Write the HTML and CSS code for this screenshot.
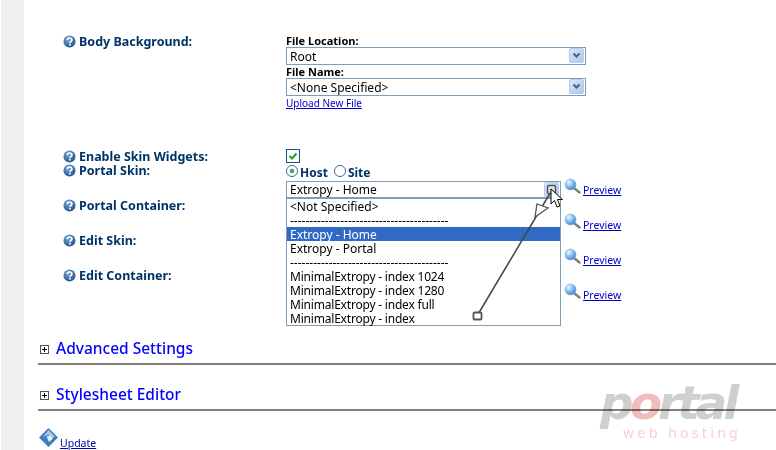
FILE: index.html
```html
<!DOCTYPE html>
<html lang="en">
<head>
<meta charset="utf-8">
<title>Skin settings</title>
<link rel="stylesheet" href="styles.css">
</head>
<body>
<svg class="defs" width="0" height="0" aria-hidden="true">
  <defs>
    <radialGradient id="help" cx="40%" cy="30%" r="75%"><stop offset="0" stop-color="#7fa8d6"/><stop offset="1" stop-color="#1c4f8c"/></radialGradient>
    <radialGradient id="lens" cx="35%" cy="30%" r="75%"><stop offset="0" stop-color="#eef7ff"/><stop offset="0.55" stop-color="#7db9ee"/><stop offset="1" stop-color="#3b7fd0"/></radialGradient>
    <linearGradient id="btn" x1="0" y1="0" x2="1" y2="1"><stop offset="0" stop-color="#dbe6fb"/><stop offset="1" stop-color="#aec4ee"/></linearGradient>
    <symbol id="i-help" viewBox="0 0 13 13"><circle cx="6.5" cy="6.5" r="6" fill="url(#help)"/><path d="M4.300 5.100C4.400 3.600 5.400 3 6.600 3c1.300 0 2.300.8 2.300 1.900 0 1-.6 1.400-1.200 1.800-.5.3-.7.6-.7 1.200" fill="none" stroke="#fff" stroke-width="1.600"/><rect x="6" y="8.800" width="1.700" height="1.700" fill="#fff"/></symbol>
    <symbol id="i-zoom" viewBox="0 0 17 17"><path d="M10 10l5.500 4.500" stroke="#808080" stroke-width="2.400" stroke-linecap="round"/><circle cx="6.500" cy="6.500" r="5.500" fill="url(#lens)" stroke="#8fb0d6" stroke-width=".6"/></symbol>
    <symbol id="i-arrow" viewBox="0 0 15 15"><rect x=".5" y=".5" width="14" height="14" rx="1.500" fill="url(#btn)" stroke="#b8cbee"/><path d="M4.500 5.500l3 3 3-3" fill="none" stroke="#4d6185" stroke-width="2"/></symbol>
  </defs>
</svg>
<div class="page">
  <aside class="side"></aside>
  <main class="main">
    <section class="form">
      <div class="row row-bg">
        <div class="label"><svg class="help"><use href="#i-help"/></svg>Body Background:</div>
        <div class="control">
          <div class="cap">File Location:</div>
          <div class="select wide"><span>Root</span><svg class="arrow"><use href="#i-arrow"/></svg></div>
          <div class="cap">File Name:</div>
          <div class="select wide"><span>&lt;None Specified&gt;</span><svg class="arrow"><use href="#i-arrow"/></svg></div>
          <a class="upload" href="#">Upload New File</a>
        </div>
      </div>
      <div class="row row-check">
        <div class="label"><svg class="help"><use href="#i-help"/></svg>Enable Skin Widgets:</div>
        <div class="control">
          <svg class="check" viewBox="0 0 14 14"><rect x=".5" y=".5" width="13" height="13" fill="#fff" stroke="#1c5180"/><path d="M3.500 7l2.500 2.500 4.500-5" fill="none" stroke="#21a121" stroke-width="2"/></svg>
        </div>
      </div>
      <div class="row row-sel">
        <div class="label"><svg class="help"><use href="#i-help"/></svg>Portal Skin:</div>
        <div class="control">
          <div class="radios">
            <svg class="radio" viewBox="0 0 13 13"><circle cx="6.500" cy="6.500" r="6" fill="#fff" stroke="#2f5f8f"/><circle cx="6.500" cy="6.500" r="2.500" fill="#3cb14a"/></svg><span class="radio-text">Host</span>
            <svg class="radio second" viewBox="0 0 13 13"><circle cx="6.500" cy="6.500" r="6" fill="#fff" stroke="#2f5f8f"/></svg><span class="radio-text">Site</span>
          </div>
          <div class="inline anchor">
            <div class="select skin"><span>Extropy - Home</span><svg class="arrow"><use href="#i-arrow"/></svg></div>
            <svg class="zoom"><use href="#i-zoom"/></svg><a class="preview" href="#">Preview</a>
            <ul class="dropdown">
              <li>&lt;Not Specified&gt;</li>
              <li>-----------------------------------------</li>
              <li class="on">Extropy - Home</li>
              <li>Extropy - Portal</li>
              <li>-----------------------------------------</li>
              <li class="tight">MinimalExtropy - index 1024</li>
              <li class="tight">MinimalExtropy - index 1280</li>
              <li class="tight">MinimalExtropy - index full</li>
              <li class="tight">MinimalExtropy - index</li>
            </ul>
          </div>
        </div>
      </div>
      <div class="row row-sel">
        <div class="label"><svg class="help"><use href="#i-help"/></svg>Portal Container:</div>
        <div class="control inline lower">
          <div class="select skin"></div>
          <svg class="zoom"><use href="#i-zoom"/></svg><a class="preview" href="#">Preview</a>
        </div>
      </div>
      <div class="row row-sel">
        <div class="label"><svg class="help"><use href="#i-help"/></svg>Edit Skin:</div>
        <div class="control inline lower">
          <div class="select skin"></div>
          <svg class="zoom"><use href="#i-zoom"/></svg><a class="preview" href="#">Preview</a>
        </div>
      </div>
      <div class="row row-sel">
        <div class="label"><svg class="help"><use href="#i-help"/></svg>Edit Container:</div>
        <div class="control inline lower">
          <div class="select skin"></div>
          <svg class="zoom"><use href="#i-zoom"/></svg><a class="preview" href="#">Preview</a>
        </div>
      </div>
    </section>
    <section class="group">
      <svg class="plus" viewBox="0 0 9 9"><rect x=".5" y=".5" width="8" height="8" fill="#fff" stroke="#555"/><path d="M2 4.500h5M4.500 2v5" stroke="#000"/></svg>
      <h2 class="group-title">Advanced Settings</h2>
    </section>
    <section class="group">
      <svg class="plus" viewBox="0 0 9 9"><rect x=".5" y=".5" width="8" height="8" fill="#fff" stroke="#555"/><path d="M2 4.500h5M4.500 2v5" stroke="#000"/></svg>
      <h2 class="group-title">Stylesheet Editor</h2>
    </section>
    <div class="actions">
      <svg class="update-icon" viewBox="0 0 19 19"><path d="M9.500 1L18 9.500 9.500 18 1 9.500z" fill="#3f7fc0" stroke="#3f7fc0" stroke-linejoin="round" stroke-width="1.500"/><path d="M9.500 2L16 8.500 12 10.500 9.500 6.500 4 9z" fill="#a8cbea"/><path d="M7.500 8.500l4-1 2.500 3-4 3.500z" fill="#e6f0fa"/></svg>
      <a class="update" href="#">Update</a>
    </div>
  </main>
</div>
<svg class="callout" width="776" height="450" viewBox="0 0 776 450" aria-hidden="true">
  <path d="M477 316L552 190" stroke="#444" stroke-width="1.500"/>
  <path d="M537 204L548 208 535 217z" fill="#fff" stroke="#555" stroke-width="1.300"/>
  <rect x="473.500" y="312.500" width="8" height="7" rx="1" fill="#fff" stroke="#555" stroke-width="1.800"/>
  <rect x="547.500" y="185.500" width="8" height="8" rx="1" fill="#ddd" stroke="#555" stroke-width="1.500"/>
  <path d="M551 189v15l3.500-3.500 2.500 6.500 3-1-2.500-6.500h5z" fill="#fff" stroke="#000"/>
</svg>
<div class="logo"><div class="logo-name">p<span class="logo-o">o</span>rtal</div><div class="logo-sub">web hosting</div></div>
</body>
</html>
```
FILE: styles.css
```css
* { box-sizing: border-box; }
html, body { margin: 0; padding: 0; }
body {
  width: 776px;
  height: 450px;
  overflow: hidden;
  background: #fff;
  font-family: "Noto Sans", "DejaVu Sans", sans-serif;
  font-size: 12px;
  color: #000;
  position: relative;
}
.defs { position: absolute; }
.page { display: flex; height: 450px; }
.side { width: 23px; margin-left: 1px; background: #efefef; flex: none; }
.main { flex: 1; min-width: 0; padding-left: 14px; }

.form { padding: 34px 0 16px 25px; }
.row { display: grid; grid-template-columns: 223px 1fr; }
.row-bg { height: 115px; }
.row-check { height: 14px; }
.row-sel { height: 35px; }

.label {
  display: flex;
  align-items: center;
  height: 15px;
  gap: 3px;
  font-weight: bold;
  font-size: 12.500px;
  line-height: 15px;
  color: #003366;
}
.help { width: 13px; height: 13px; flex: none; }
.cap { font-weight: bold; font-size: 11px; line-height: 13px; height: 13px; }
.select {
  position: relative;
  display: flex;
  align-items: center;
  height: 18px;
  border: 1px solid #7f9db9;
  background: #fff;
  padding-left: 3px;
  font-size: 12px;
}
.select.wide { width: 300px; }
.select.skin { width: 275px; height: 17px; flex: none; }
.arrow { position: absolute; right: 1px; top: 0; width: 15px; height: 15px; }
.upload { font-size: 10px; color: #00c; line-height: 14px; display: block; }

.check { width: 14px; height: 14px; display: block; }
.radios { display: flex; align-items: center; height: 18px; font-weight: bold; font-size: 12px; color: #003366; }
.radio { width: 12px; height: 12px; flex: none; margin-top: -3px; }
.radio-text { margin-left: 2px; }
.radio.second { margin-left: 6px; }

.inline { display: flex; align-items: flex-start; }
.lower { padding-top: 18px; }
.anchor { position: relative; }
.zoom { width: 17px; height: 17px; margin-left: 3px; flex: none; margin-top: -3px; }
.preview { font-size: 10.500px; color: #00c; margin-left: 2px; line-height: 19px; }

.dropdown {
  position: absolute;
  left: 0;
  top: 17px;
  width: 275px;
  margin: 0;
  padding: 0;
  list-style: none;
  background: #fff;
  border: 1px solid #7f9db9;
  font-size: 12px;
  z-index: 2;
}
.dropdown li { height: 14px; line-height: 16px; padding-left: 3px; white-space: nowrap; }
.dropdown .on { background: #316ac5; color: #fff; }
.dropdown .tight { letter-spacing: -0.2px; }

.group {
  display: flex;
  align-items: center;
  height: 46px;
  padding-top: 14px;
  border-bottom: 2px solid #808080;
  padding-left: 2px;
  gap: 7px;
}
.plus { width: 9px; height: 9px; flex: none; margin-top: 2px; }
.group-title { margin: 0; font-size: 15.500px; font-weight: 500; color: #00f; }

.actions { display: flex; align-items: flex-start; padding-top: 17px; gap: 2px; padding-left: 1px; }
.update-icon { width: 19px; height: 19px; flex: none; }
.update { font-size: 10.500px; color: #00a; line-height: 12px; margin-top: 9px; }

.callout { position: absolute; left: 0; top: 0; z-index: 5; pointer-events: none; }
.logo {
  position: absolute;
  left: 600px;
  top: 381px;
  width: 148px;
  filter: blur(.5px);
  mix-blend-mode: multiply;
  z-index: 6;
  font-family: "DejaVu Sans", sans-serif;
}
.logo-name { font-size: 47px; font-style: italic; font-weight: bold; line-height: 44px; letter-spacing: -4px; color: #cfcfcf; }
.logo-o { color: #f2bcbc; }
.logo-sub { font-size: 14px; line-height: 16px; letter-spacing: 3px; color: #f8d0d4; text-align: right; padding-right: 7px; }
```
